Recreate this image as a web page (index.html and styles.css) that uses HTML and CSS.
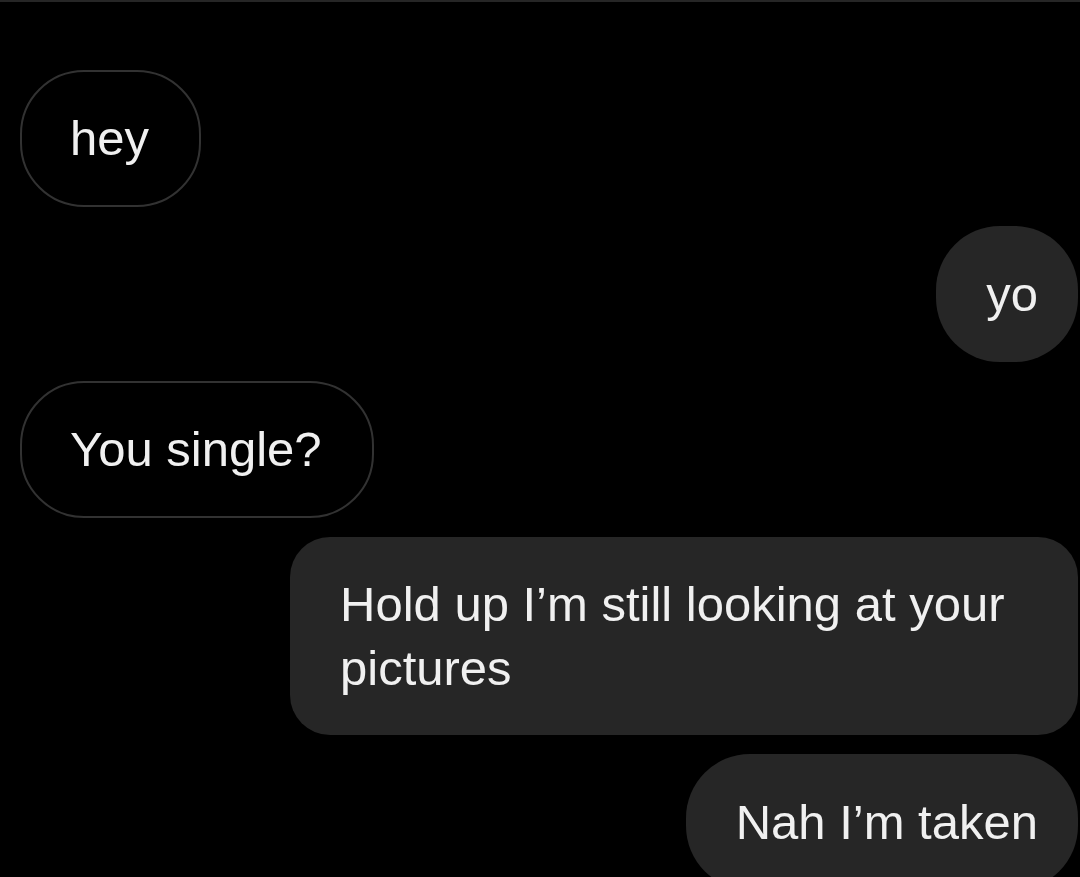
FILE: index.html
```html
<!DOCTYPE html>
<html lang="en">
<head>
<meta charset="utf-8">
<title>Chat</title>
<link rel="stylesheet" href="styles.css">
</head>
<body>
<div class="screen">
  <div class="chat">
    <div class="bubble bubble--in">hey</div>
    <div class="bubble bubble--out">yo</div>
    <div class="bubble bubble--in">You single?</div>
    <div class="bubble bubble--out bubble--multi">Hold up I’m still looking at your pictures</div>
    <div class="bubble bubble--out">Nah I’m taken</div>
  </div>
</div>
</body>
</html>
```

FILE: styles.css
```css
html, body {
  margin: 0;
  padding: 0;
  background: #000;
}

.screen {
  width: 1080px;
  height: 877px;
  overflow: hidden;
  background: #000;
  border-top: 2px solid #262626;
  box-sizing: border-box;
  font-family: "Liberation Sans", Arial, sans-serif;
}

.chat {
  display: flex;
  flex-direction: column;
  gap: 19px;
  padding: 68px 2px 0 20px;
}

.bubble {
  font-size: 49px;
  line-height: 64px;
  color: #f0f0f0;
  border-radius: 64px;
  box-sizing: border-box;
}

.bubble--in {
  align-self: flex-start;
  border: 2px solid #323232;
  padding: 34px 50px 35px 48px;
}

.bubble--out {
  align-self: flex-end;
  background: #262626;
  padding: 36px 40px 36px 50px;
}

.bubble--multi {
  max-width: 788px;
  border-radius: 40px;
  padding-top: 35px;
  padding-bottom: 35px;
}
```
